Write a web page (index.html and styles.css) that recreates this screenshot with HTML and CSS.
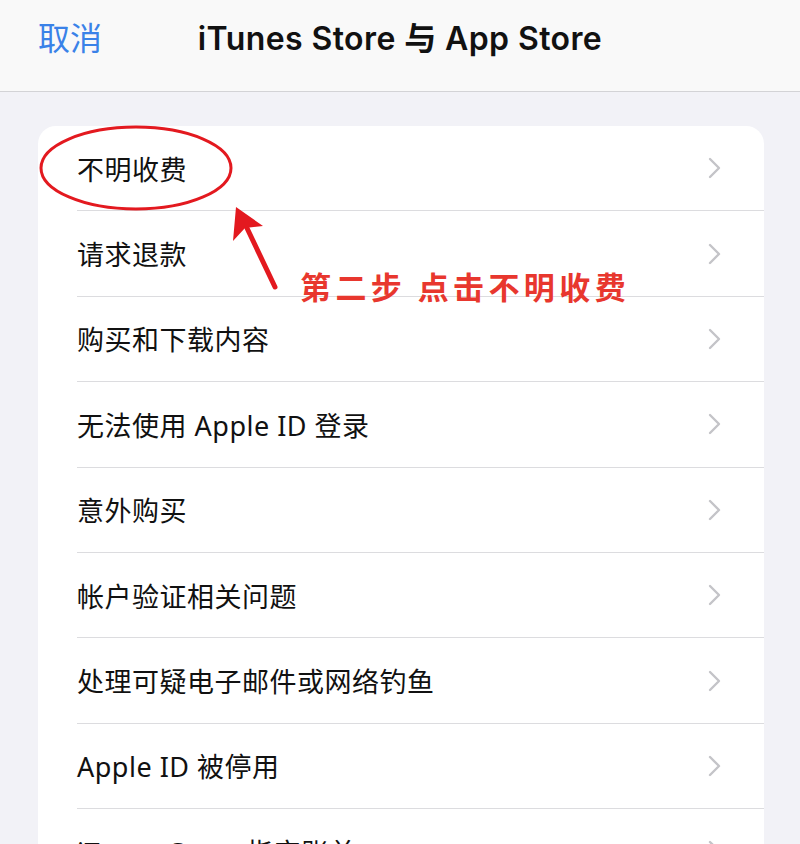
FILE: index.html
```html
<!DOCTYPE html>
<html lang="zh-CN">
<head>
<meta charset="utf-8">
<link rel="stylesheet" href="styles.css">
</head>
<body>
<header class="nav">
  <span class="cancel">取消</span>
  <span class="title">iTunes Store 与 App Store</span>
  <span></span>
</header>
<main class="content">
  <ul class="card">
    <li class="row"><span>不明收费</span><svg class="chev" viewBox="0 0 14 22"><polyline points="2,2 11,11 2,20"/></svg></li>
    <li class="row"><span>请求退款</span><svg class="chev" viewBox="0 0 14 22"><polyline points="2,2 11,11 2,20"/></svg></li>
    <li class="row"><span>购买和下载内容</span><svg class="chev" viewBox="0 0 14 22"><polyline points="2,2 11,11 2,20"/></svg></li>
    <li class="row"><span>无法使用 Apple ID 登录</span><svg class="chev" viewBox="0 0 14 22"><polyline points="2,2 11,11 2,20"/></svg></li>
    <li class="row"><span>意外购买</span><svg class="chev" viewBox="0 0 14 22"><polyline points="2,2 11,11 2,20"/></svg></li>
    <li class="row"><span>帐户验证相关问题</span><svg class="chev" viewBox="0 0 14 22"><polyline points="2,2 11,11 2,20"/></svg></li>
    <li class="row"><span>处理可疑电子邮件或网络钓鱼</span><svg class="chev" viewBox="0 0 14 22"><polyline points="2,2 11,11 2,20"/></svg></li>
    <li class="row"><span>Apple ID 被停用</span><svg class="chev" viewBox="0 0 14 22"><polyline points="2,2 11,11 2,20"/></svg></li>
    <li class="row"><span>iTunes Store 指定账单</span><svg class="chev" viewBox="0 0 14 22"><polyline points="2,2 11,11 2,20"/></svg></li>
  </ul>
</main>
<svg class="annot" viewBox="0 0 800 844" width="800" height="844">
  <ellipse cx="136" cy="168" rx="95" ry="41" fill="none" stroke="#e3191f" stroke-width="3"/>
  <line x1="275" y1="287" x2="246" y2="226" stroke="#e3191f" stroke-width="5" stroke-linecap="round"/>
  <polygon points="236,207 233,241 245,228 263,226" fill="#e3191f"/>
</svg>
<div class="note">第二步 点击不明收费</div>
</body>
</html>
```
FILE: styles.css
```css
html, body {
  margin: 0;
  padding: 0;
}
body {
  background: #f2f2f7;
  width: 800px;
  height: 844px;
  overflow: hidden;
  position: relative;
  font-family: "Noto Sans", "Noto Sans CJK SC", sans-serif;
  color: #111;
}
.nav {
  height: 71px;
  background: #f9f9f9;
  border-bottom: 1px solid #d3d3d6;
  display: grid;
  grid-template-columns: 1fr auto 1fr;
  align-items: center;
  padding: 0 0 20px 38px;
}
.cancel {
  color: #3a82e8;
  font-size: 32px;
  font-family: "Noto Sans CJK SC", sans-serif;
}
.title {
  font-weight: 600;
  font-size: 32px;
  letter-spacing: 0.4px;
  font-family: "Inter", "Noto Sans CJK SC", sans-serif;
  margin-right: 38px;
}
.content {
  padding: 34px 36px 0 38px;
}
.card {
  list-style: none;
  margin: 0;
  padding: 0 0 0 39px;
  background: #fff;
  border-radius: 18px;
  width: 687px;
}
.row {
  height: 85.4px;
  box-sizing: border-box;
  border-bottom: 1px solid #dcdcdf;
  display: flex;
  align-items: center;
  justify-content: space-between;
  padding-right: 42px;
  font-size: 27px;
  letter-spacing: 0.5px;
}
.chev {
  width: 14px;
  height: 22px;
  fill: none;
  stroke: #c4c4c8;
  stroke-width: 2.4;
  stroke-linecap: round;
  stroke-linejoin: round;
}
.annot {
  position: absolute;
  left: 0;
  top: 0;
  pointer-events: none;
}
.note {
  position: absolute;
  left: 300px;
  top: 263px;
  color: #e8372e;
  font-size: 31px;
  font-weight: 700;
  letter-spacing: 4.4px;
  font-family: "Noto Sans CJK SC", sans-serif;
}
```
